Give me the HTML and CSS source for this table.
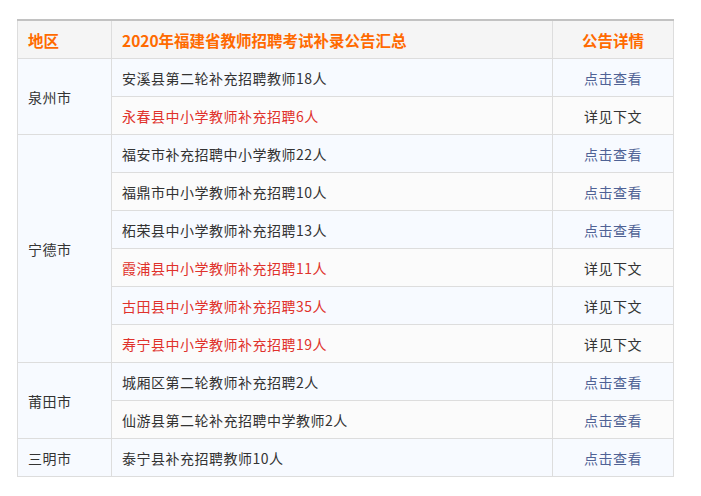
FILE: index.html
```html
<!DOCTYPE html>
<html lang="zh-CN">
<head>
<meta charset="utf-8">
<link rel="stylesheet" href="styles.css">
</head>
<body>
<div class="page">
<table class="sum">
  <colgroup><col class="c1"><col class="c2"><col class="c3"></colgroup>
  <thead>
    <tr><th class="left">地区</th><th class="left">2020年福建省教师招聘考试补录公告汇总</th><th>公告详情</th></tr>
  </thead>
  <tbody>
    <tr class="odd"><td rowspan="2">泉州市</td><td>安溪县第二轮补充招聘教师18人</td><td class="ctr"><a class="lnk">点击查看</a></td></tr>
    <tr class="even"><td class="red">永春县中小学教师补充招聘6人</td><td class="ctr">详见下文</td></tr>
    <tr class="odd"><td rowspan="6">宁德市</td><td>福安市补充招聘中小学教师22人</td><td class="ctr"><a class="lnk">点击查看</a></td></tr>
    <tr class="even"><td>福鼎市中小学教师补充招聘10人</td><td class="ctr"><a class="lnk">点击查看</a></td></tr>
    <tr class="odd"><td>柘荣县中小学教师补充招聘13人</td><td class="ctr"><a class="lnk">点击查看</a></td></tr>
    <tr class="even"><td class="red">霞浦县中小学教师补充招聘11人</td><td class="ctr">详见下文</td></tr>
    <tr class="odd"><td class="red">古田县中小学教师补充招聘35人</td><td class="ctr">详见下文</td></tr>
    <tr class="even"><td class="red">寿宁县中小学教师补充招聘19人</td><td class="ctr">详见下文</td></tr>
    <tr class="odd"><td rowspan="2">莆田市</td><td>城厢区第二轮教师补充招聘2人</td><td class="ctr"><a class="lnk">点击查看</a></td></tr>
    <tr class="even"><td>仙游县第二轮补充招聘中学教师2人</td><td class="ctr"><a class="lnk">点击查看</a></td></tr>
    <tr class="odd"><td>三明市</td><td>泰宁县补充招聘教师10人</td><td class="ctr"><a class="lnk">点击查看</a></td></tr>
  </tbody>
</table>
</div>
</body>
</html>
```

FILE: styles.css
```css
html, body { margin: 0; padding: 0; background: #fff; }
body { font-family: "Noto Sans CJK SC", "Noto Sans", sans-serif; color: #333; font-size: 14px; }
.page { padding: 19px 0 0 17px; }
.sum { border-collapse: collapse; table-layout: fixed; width: 656px; }
.c1 { width: 94px; }
.c2 { width: 441px; }
.c3 { width: 121px; }
.sum th, .sum td { border: 1px solid #dddddd; padding: 2px 10px 0; height: 38px; box-sizing: border-box; line-height: 20px; }
.sum td { letter-spacing: 0.5px; }
.sum th { background: #f5f5f5; color: #ff6a00; font-size: 15.5px; font-weight: bold; text-align: center; height: 38px; }
.sum thead tr th { border-top: 2px solid #c2c2c2; }
.sum th.left { text-align: left; }
.odd td { background: #f7faff; }
.even td { background: #fbfbfb; }
.ctr { text-align: center; }
.red { color: #e0322b; }
.lnk { color: #4f6295; text-decoration: none; }
```
